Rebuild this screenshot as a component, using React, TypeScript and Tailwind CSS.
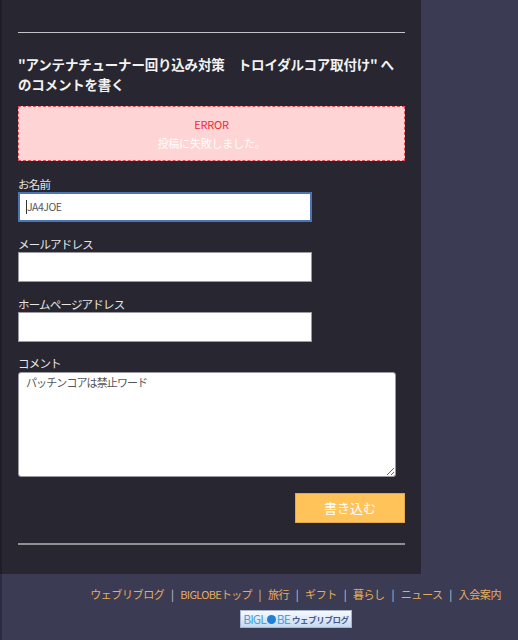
import React from "react";

const font = { fontFamily: '"Noto Sans CJK JP", "Noto Sans", sans-serif' };

function Field({ label, value, focused }: { label: string; value?: string; focused?: boolean }) {
  return (
    <div className="flex flex-col">
      <label className="h-[15px] text-[11.5px] leading-[14px] tracking-[-0.8px] text-[#e6e6e6]">{label}</label>
      <div
        className={
          focused
            ? "flex h-[30px] w-[294px] items-center border-2 border-[#4a76b8] bg-white pl-[6px] text-[10.5px] tracking-[-0.5px] text-[#55565c]"
            : "h-[30px] w-[294px] border border-[#9a9aa2] bg-white"
        }
      >
        {focused ? (
          <>
            <span className="h-[14px] w-px bg-[#333]" />
            <span>{value}</span>
          </>
        ) : null}
      </div>
    </div>
  );
}

const links = ["ウェブリブログ", "BIGLOBEトップ", "旅行", "ギフト", "暮らし", "ニュース", "入会案内"];

export default function App() {
  return (
    <div className="flex h-[640px] w-[518px] flex-col overflow-hidden bg-[#3c3b54]" style={font}>
      <main className="h-[574px] w-[421px] border-l-2 border-[#1e1d28] bg-[#282630] px-[16px] pt-[32px]">
        <hr className="border-t border-[#c4c4c8]" />
        <h2 className="mt-[21px] text-[13.5px] font-bold leading-[20px] tracking-[-0.2px] text-[#f2f2f2]">
          "アンテナチューナー回り込み対策　トロイダルコア取付け" へのコメントを書く
        </h2>
        <div className="mt-[12px] flex h-[55px] flex-col items-center justify-center gap-[2px] border border-dashed border-[#e0505a] bg-[#ffd4d4] text-[11px] leading-[17px]">
          <span className="tracking-[-0.2px] text-[#f0283c]">ERROR</span>
          <span className="tracking-[-0.2px] text-white">投稿に失敗しました。</span>
        </div>
        <div className="mt-[16px] flex flex-col gap-[15px]">
          <Field label="お名前" value="JA4JOE" focused />
          <Field label="メールアドレス" />
          <Field label="ホームページアドレス" />
          <div className="flex flex-col">
            <label className="h-[15px] text-[11.5px] leading-[13px] tracking-[-0.8px] text-[#e6e6e6]">コメント</label>
            <textarea
              readOnly
              defaultValue="パッチンコアは禁止ワード"
              className="h-[105px] w-[378px] rounded-[3px] border border-[#9a9aa2] bg-white px-[7px] py-[1px] text-[11px] leading-[17px] tracking-[-0.9px] text-[#55565c]"
            />
          </div>
        </div>
        <div className="mt-[16px] flex justify-end">
          <button className="h-[30px] w-[110px] border border-[#e0a850] bg-[#ffc35a] text-[13px] text-white">書き込む</button>
        </div>
        <hr className="mt-[20px] border-t-2 border-[#8f8f94]" />
      </main>
      <footer className="flex flex-1 flex-col border-l-2 border-[#2c2b40]">
        <nav className="mt-[12px] flex h-[16px] items-center justify-end pr-[17px] text-[11px] leading-[16px] tracking-[-0.4px] text-[#e6ad5c]">
          {links.map((l, i) => (
            <React.Fragment key={l}>
              {i > 0 && <span className="w-[16px] text-center text-[#c9cbd6]">|</span>}
              <span className={l.startsWith("BIGLOBE") ? "tracking-[-0.7px]" : ""}>{l}</span>
            </React.Fragment>
          ))}
        </nav>
        <div className="ml-[238px] mt-[8px] flex h-[18px] w-[112px] items-center justify-center whitespace-nowrap border border-[#a6b6d2] bg-gradient-to-b from-[#f8fbff] to-[#c6d8ee] text-[8.5px]">
          <span className="text-[12px] leading-none tracking-[-0.9px] text-[#45a4e0]">BIGL</span>
          <span className="mx-px h-[9px] w-[9px] rounded-full bg-[#1f7fd6]" />
          <span className="text-[12px] leading-none tracking-[-0.9px] text-[#45a4e0]">BE</span>
          <span className="ml-[2px] font-bold tracking-[-0.4px] text-[#4a5a90]">ウェブリブログ</span>
        </div>
      </footer>
    </div>
  );
}
